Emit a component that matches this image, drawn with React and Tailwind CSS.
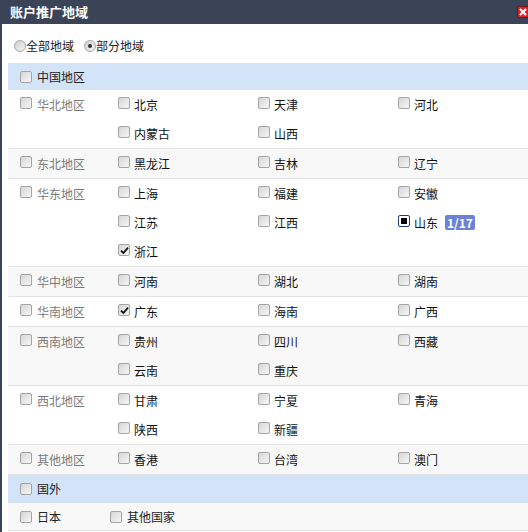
const REGIONS = [
  { name: '华北地区', items: ['北京', '天津', '河北', '内蒙古', '山西'] },
  { name: '东北地区', items: ['黑龙江', '吉林', '辽宁'], alt: true },
  { name: '华东地区', items: ['上海', '福建', '安徽', '江苏', '江西', '山东', '浙江'] },
  { name: '华中地区', items: ['河南', '湖北', '湖南'], alt: true },
  { name: '华南地区', items: ['广东', '海南', '广西'] },
  { name: '西南地区', items: ['贵州', '四川', '西藏', '云南', '重庆'], alt: true },
  { name: '西北地区', items: ['甘肃', '宁夏', '青海', '陕西', '新疆'] },
  { name: '其他地区', items: ['香港', '台湾', '澳门'], alt: true },
];

const CHECKED = ['浙江', '广东'];
const PARTIAL = { 山东: '1/17' };

function Box({ state }) {
  if (state === 'partial') {
    return (
      <span className="flex h-[12px] w-[12px] shrink-0 items-center justify-center rounded-[2px] border border-[#1f3f7a] bg-white">
        <span className="h-[6px] w-[6px] bg-black" />
      </span>
    );
  }
  return (
    <span className="flex h-[12px] w-[12px] shrink-0 items-center justify-center rounded-[2px] border border-[#a4a4a4] bg-gradient-to-br from-[#d6d6d6] to-[#f6f6f6]">
      {state === 'checked' && (
        <svg width="9" height="9" viewBox="0 0 9 9">
          <path d="M1 4.6 L3.4 7 L8 1.6" fill="none" stroke="#111" strokeWidth="1.8" />
        </svg>
      )}
    </span>
  );
}

function Radio({ checked }) {
  return (
    <span className="flex h-[12px] w-[12px] shrink-0 items-center justify-center rounded-full border border-[#a8a8a8] bg-gradient-to-br from-[#cfcfcf] to-[#f4f4f4]">
      {checked && <span className="h-[4px] w-[4px] rounded-full bg-[#333]" />}
    </span>
  );
}

export default function App() {
  return (
    <div
      className="h-[532px] w-[528px] overflow-hidden bg-[#3b4357] text-[12px]"
      style={{ fontFamily: '"SimSun", "Noto Sans CJK SC", sans-serif' }}
    >
      <div className="flex h-[24px] items-center justify-between pl-[10px]">
        <span className="text-[13px] font-bold text-white">账户推广地域</span>
        <span className="-mr-[1px] flex h-[12px] w-[12px] items-center justify-center rounded-[2px] border border-[#7a1010] bg-[#d8262a]">
          <svg width="8" height="8" viewBox="0 0 8 8">
            <path d="M1 1 L7 7 M7 1 L1 7" stroke="#fff" strokeWidth="2" />
          </svg>
        </span>
      </div>

      <div className="ml-[2px] h-[508px] bg-white pl-[6px]">
        <div className="flex h-[39px] items-center gap-[10px] pl-[6px] pt-[5px] text-[#222]">
          <label className="flex items-center">
            <Radio />
            <span>全部地域</span>
          </label>
          <label className="flex items-center">
            <Radio checked />
            <span>部分地域</span>
          </label>
        </div>

        <div className="flex h-[27px] items-center gap-[5px] bg-[#d3e4f8] pl-[12px] text-[#222]">
          <Box />
          <span>中国地区</span>
        </div>

        {REGIONS.map((r) => (
          <div
            key={r.name}
            className={`flex border-b border-[#e2e2e2] ${r.alt ? 'bg-[#f8f8f8]' : 'bg-white'}`}
          >
            <div className="flex h-[29px] w-[110px] shrink-0 items-center gap-[5px] pl-[12px] text-[#7a7a7a]">
              <span className="-mt-[3px]">
                <Box />
              </span>
              <span>{r.name}</span>
            </div>
            <div className="grid grid-cols-[140px_140px_140px]">
              {r.items.map((p) => (
                <div key={p} className="flex h-[29px] items-center gap-[4px] text-[#111]">
                  <span className="-mt-[3px]">
                    <Box state={CHECKED.includes(p) ? 'checked' : PARTIAL[p] ? 'partial' : null} />
                  </span>
                  <span>{p}</span>
                  {PARTIAL[p] && (
                    <span className="ml-[3px] rounded-[2px] bg-[#6b82d8] px-[2px] font-bold leading-[15px] text-white">
                      {PARTIAL[p]}
                    </span>
                  )}
                </div>
              ))}
            </div>
          </div>
        ))}

        <div className="flex h-[28px] items-center gap-[5px] bg-[#d3e4f8] pl-[12px] text-[#222]">
          <Box />
          <span>国外</span>
        </div>
        <div className="flex h-[28px] items-center border-b border-[#e2e2e2] bg-[#f8f8f8] pl-[12px] text-[#222]">
          <div className="flex w-[90px] items-center gap-[5px]">
            <Box />
            <span>日本</span>
          </div>
          <div className="flex items-center gap-[5px]">
            <Box />
            <span>其他国家</span>
          </div>
        </div>
      </div>
    </div>
  );
}
